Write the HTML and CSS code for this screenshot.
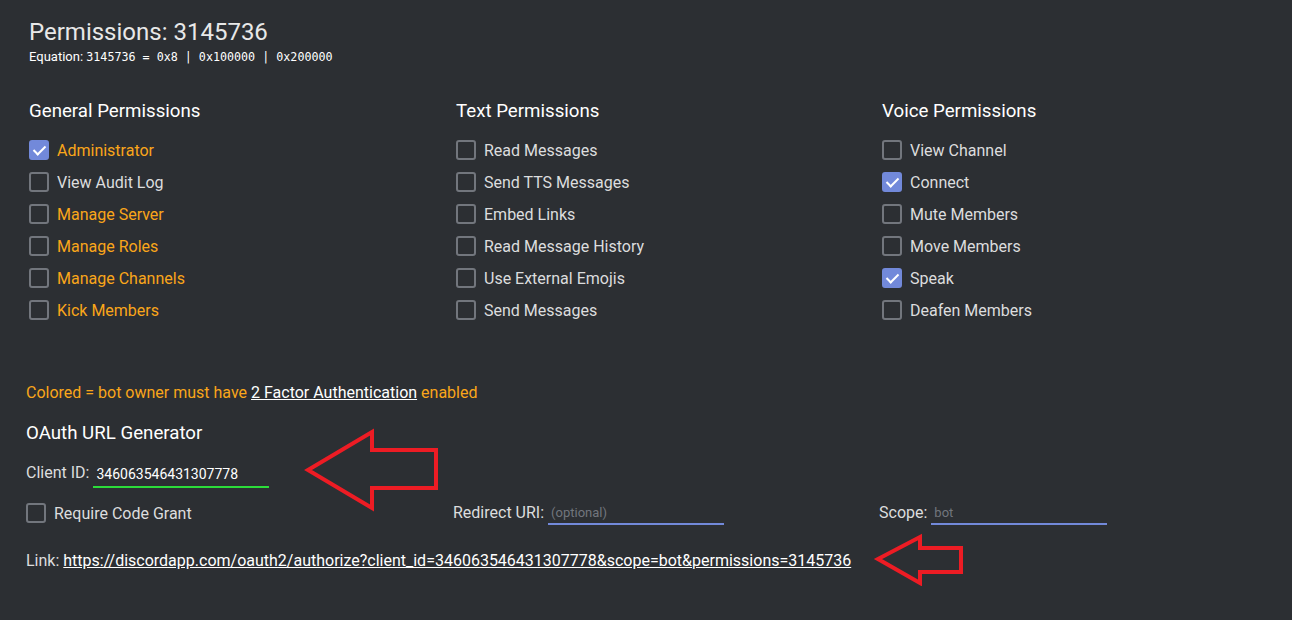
FILE: index.html
```html
<!DOCTYPE html>
<html>
<head>
<meta charset="utf-8">
<link rel="stylesheet" href="styles.css">
</head>
<body>
<div class="page">
  <header class="top">
    <h1 class="title">Permissions: 3145736</h1>
    <div class="equation">Equation: <code>3145736 = 0x8 | 0x100000 | 0x200000</code></div>
  </header>

  <section class="cols">
    <div class="col">
      <h2 class="col-title">General Permissions</h2>
      <label class="perm colored"><span class="box checked"></span>Administrator</label>
      <label class="perm"><span class="box"></span>View Audit Log</label>
      <label class="perm colored"><span class="box"></span>Manage Server</label>
      <label class="perm colored"><span class="box"></span>Manage Roles</label>
      <label class="perm colored"><span class="box"></span>Manage Channels</label>
      <label class="perm colored"><span class="box"></span>Kick Members</label>
    </div>
    <div class="col">
      <h2 class="col-title">Text Permissions</h2>
      <label class="perm"><span class="box"></span>Read Messages</label>
      <label class="perm"><span class="box"></span>Send TTS Messages</label>
      <label class="perm"><span class="box"></span>Embed Links</label>
      <label class="perm"><span class="box"></span>Read Message History</label>
      <label class="perm"><span class="box"></span>Use External Emojis</label>
      <label class="perm"><span class="box"></span>Send Messages</label>
    </div>
    <div class="col">
      <h2 class="col-title">Voice Permissions</h2>
      <label class="perm"><span class="box"></span>View Channel</label>
      <label class="perm"><span class="box checked"></span>Connect</label>
      <label class="perm"><span class="box"></span>Mute Members</label>
      <label class="perm"><span class="box"></span>Move Members</label>
      <label class="perm"><span class="box checked"></span>Speak</label>
      <label class="perm"><span class="box"></span>Deafen Members</label>
    </div>
  </section>

  <section class="oauth">
    <p class="note">Colored = bot owner must have <a class="link" href="#">2 Factor Authentication</a> enabled</p>
    <h2 class="oauth-title">OAuth URL Generator</h2>
    <div class="client-row">
      <span class="lbl">Client ID:</span>
      <span class="field field-green">346063546431307778</span>
    </div>
    <div class="opts">
      <label class="perm opt"><span class="box"></span>Require Code Grant</label>
      <div class="opt opt-field"><span class="lbl">Redirect URI:</span><span class="field field-blue placeholder">(optional)</span></div>
      <div class="opt opt-field"><span class="lbl">Scope:</span><span class="field field-blue placeholder">bot</span></div>
    </div>
    <p class="link-row">Link: <a class="link" href="#">https://discordapp.com/oauth2/authorize?client_id=346063546431307778&amp;scope=bot&amp;permissions=3145736</a></p>
  </section>

  <svg class="arrow arrow-1" width="140" height="84" viewBox="0 0 140 84">
    <polygon points="6,42 70,4 70,22 134,22 134,60 70,60 70,80" fill="none" stroke="#ed1c24" stroke-width="4" stroke-linejoin="miter"/>
  </svg>
  <svg class="arrow arrow-2" width="94" height="54" viewBox="0 0 94 54">
    <polygon points="5,27 47,5 47,16 88,16 88,40 47,40 47,51" fill="none" stroke="#ed1c24" stroke-width="4" stroke-linejoin="miter"/>
  </svg>
</div>
</body>
</html>
```

FILE: styles.css
```css
html, body {
  margin: 0;
  padding: 0;
  background: #2c2f33;
}
body {
  font-family: Roboto, "Liberation Sans", sans-serif;
  color: #dcddde;
  width: 1292px;
  height: 620px;
  overflow: hidden;
}
.page {
  position: relative;
  padding: 16px 0 0 29px;
}
.title {
  margin: 0;
  font-weight: 400;
  font-size: 24px;
  line-height: 32px;
  color: #e8e8e8;
}
.equation {
  font-size: 13px;
  line-height: 14px;
  color: #ffffff;
  margin-top: 2px;
}
.equation code {
  font-family: "DejaVu Sans Mono", monospace;
  font-size: 11.7px;
}
.cols {
  display: grid;
  grid-template-columns: 427px 426px 400px;
  margin-top: 35px;
}
.col {
  display: flex;
  flex-direction: column;
}
.col-title {
  margin: 0 0 11px;
  font-size: 18.7px;
  font-weight: 400;
  line-height: 24px;
  color: #ffffff;
}
.perm {
  display: flex;
  align-items: center;
  gap: 8px;
  height: 32px;
  font-size: 16px;
  color: #dcddde;
}
.perm.colored {
  color: #faa61a;
}
.box {
  box-sizing: border-box;
  width: 20px;
  height: 20px;
  border: 2px solid #72767d;
  border-radius: 3px;
  flex: none;
  position: relative;
}
.box.checked {
  background: #7289da;
  border-color: #7289da;
}
.box.checked::after {
  content: "";
  position: absolute;
  left: 5px;
  top: 1px;
  width: 5px;
  height: 10px;
  border: solid #ffffff;
  border-width: 0 2.5px 2.5px 0;
  transform: rotate(45deg);
}
.oauth {
  margin-left: -3px;
  margin-top: 55px;
}
.note {
  margin: 0;
  font-size: 16px;
  line-height: 24px;
  color: #faa61a;
}
.link {
  color: #ffffff;
  text-decoration: underline;
}
.oauth-title {
  margin: 16px 0 0;
  font-size: 18.7px;
  font-weight: 400;
  line-height: 24px;
  color: #ffffff;
}
.client-row {
  display: flex;
  align-items: flex-end;
  gap: 4px;
  margin-top: 16px;
  height: 24px;
}
.lbl {
  font-size: 16px;
  color: #dcddde;
  line-height: 24px;
}
.field {
  box-sizing: border-box;
  display: inline-block;
  width: 176px;
  height: 24px;
  padding: 4px 0 0 3px;
  font-size: 14px;
  line-height: 16px;
  color: #ffffff;
}
.field-green {
  border-bottom: 2px solid #2cdd3a;
  margin-bottom: -3px;
  padding-top: 3px;
  height: 25px;
}
.field-blue {
  border-bottom: 2px solid #7289da;
}
.placeholder {
  font-size: 13px;
  color: #72767d;
}
.opts {
  display: grid;
  grid-template-columns: 427px 426px 300px;
  margin-top: 12px;
  align-items: center;
}
.opt-field {
  display: flex;
  align-items: center;
  gap: 4px;
}
.link-row {
  margin: 20px 0 0;
  font-size: 16px;
  line-height: 24px;
  color: #dcddde;
}
.arrow {
  position: absolute;
}
.arrow-1 {
  left: 302px;
  top: 428px;
}
.arrow-2 {
  left: 873px;
  top: 532px;
}
```
